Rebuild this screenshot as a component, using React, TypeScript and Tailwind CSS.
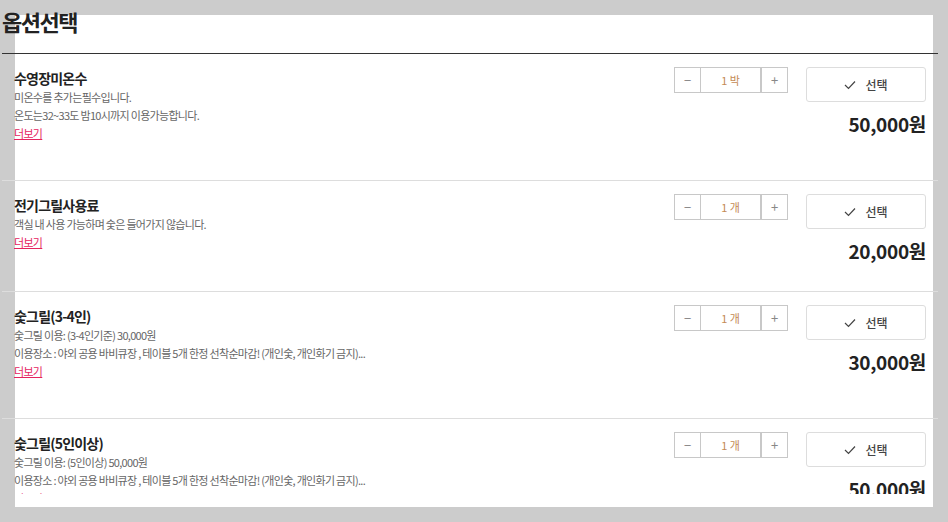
import React from "react";

type Option = {
  name: string;
  lines: string[];
  unit: string;
  price: string;
};

const options: Option[] = [
  {
    name: "수영장미온수",
    lines: ["미온수를 추가는필수입니다.", "온도는32~33도 밤10시까지 이용가능합니다."],
    unit: "박",
    price: "50,000원",
  },
  {
    name: "전기그릴사용료",
    lines: ["객실 내 사용 가능하며 숯은 들어가지 않습니다."],
    unit: "개",
    price: "20,000원",
  },
  {
    name: "숯그릴(3-4인)",
    lines: [
      "숯그릴 이용: (3-4인기준) 30,000원",
      "이용장소 : 야외 공용 바비큐장 , 테이블 5개 한정 선착순마감! (개인숯, 개인화기 금지)...",
    ],
    unit: "개",
    price: "30,000원",
  },
  {
    name: "숯그릴(5인이상)",
    lines: [
      "숯그릴 이용: (5인이상) 50,000원",
      "이용장소 : 야외 공용 바비큐장 , 테이블 5개 한정 선착순마감! (개인숯, 개인화기 금지)...",
    ],
    unit: "개",
    price: "50,000원",
  },
];

function Stepper({ unit }: { unit: string }) {
  return (
    <div className="flex h-[26px]">
      <button className="w-[27px] h-full border border-[#c8c8c8] flex items-center justify-center text-[#888] text-[13px]">
        −
      </button>
      <div className="w-[60px] h-full border-y border-r border-[#c8c8c8] flex items-center justify-center text-[11px] text-[#c48a55]">
        1 {unit}
      </div>
      <button className="w-[27px] h-full border border-[#c8c8c8] flex items-center justify-center text-[#888] text-[13px]">
        +
      </button>
    </div>
  );
}

function OptionRow({ opt }: { opt: Option }) {
  return (
    <div className="flex justify-between border-b border-[#dddddd] pl-[12px] pr-[12px] pt-[13px] pb-[28px]">
      <div className="pt-[1px] pb-[10px]">
        <div className="text-[14px] leading-[20px] font-bold text-[#222] tracking-[-0.8px]">{opt.name}</div>
        {opt.lines.map((l, i) => (
          <div key={i} className="text-[11px] leading-[18px] text-[#666] tracking-[-0.7px]">
            {l}
          </div>
        ))}
        <a className="block w-fit text-[11px] leading-[18px] text-[#e5245f] underline tracking-[-0.7px]">더보기</a>
      </div>
      <div className="flex flex-col items-end">
        <div className="flex items-start gap-[18px]">
          <Stepper unit={opt.unit} />
          <button className="w-[120px] h-[35px] border border-[#dddddd] rounded-[3px] flex items-center justify-center gap-[9px] text-[12px] font-medium text-[#444]">
            <svg width="12" height="10" viewBox="0 0 12 10" fill="none">
              <polyline points="1,5 4.5,8.5 11,1.5" stroke="#444" strokeWidth="1.2" />
            </svg>
            <span>선택</span>
          </button>
        </div>
        <div className="mt-[10px] text-[19px] leading-[24px] font-bold text-[#222] tracking-[-0.3px]">{opt.price}</div>
      </div>
    </div>
  );
}

export default function App() {
  return (
    <div
      className="relative w-[948px] h-[522px] bg-[#cccccc] p-[15px] overflow-hidden"
      style={{ fontFamily: '"Noto Sans CJK KR", sans-serif' }}
    >
      <div className="w-[918px] h-[492px] bg-white" />
      {/* option list sits over the white sheet, wider than it */}
      <div className="absolute left-[2px] top-0 w-[936px] h-[494px] overflow-hidden">
        <h2 className="h-[54px] border-b border-[#333] pt-[6px] text-[22px] leading-[30px] font-bold text-[#222] tracking-[-1.5px]">
          옵션선택
        </h2>
        {options.map((o) => (
          <OptionRow key={o.name} opt={o} />
        ))}
      </div>
    </div>
  );
}
